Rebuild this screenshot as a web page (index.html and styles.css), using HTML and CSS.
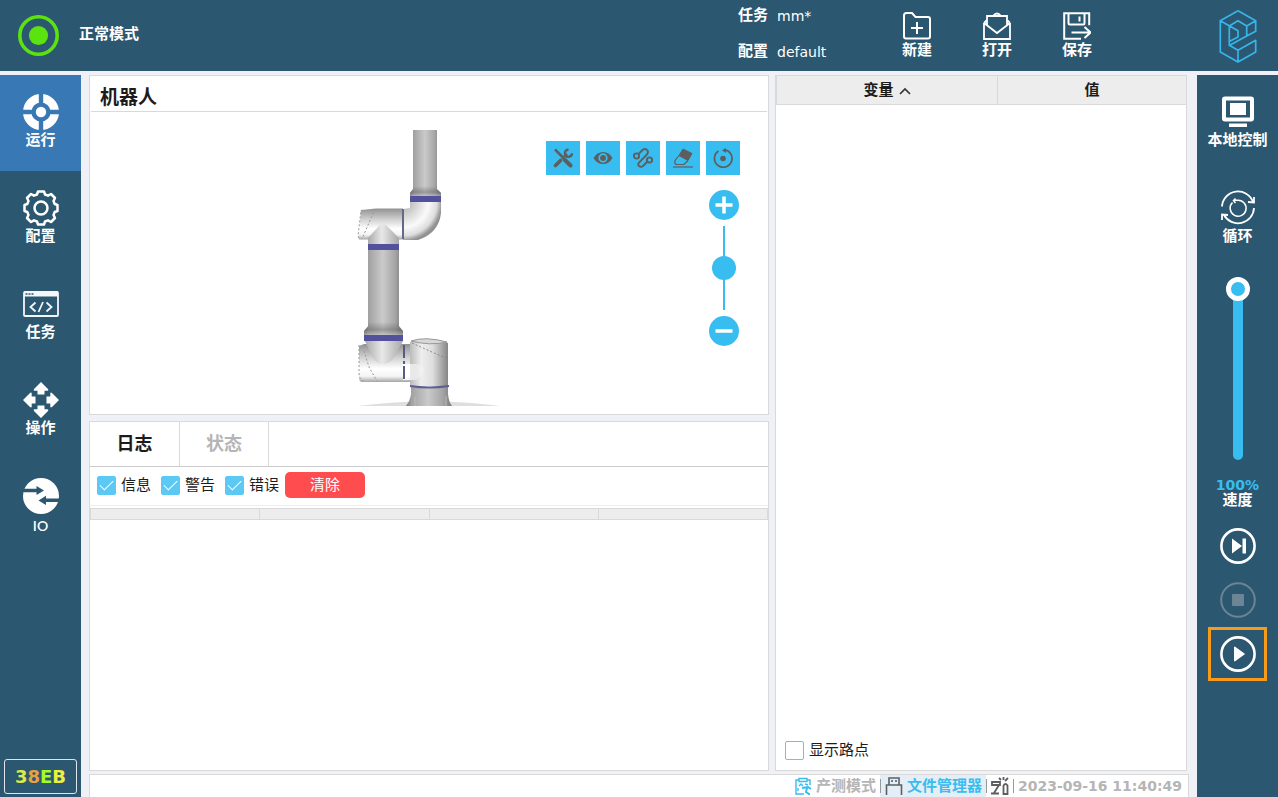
FILE: index.html
```html
<!DOCTYPE html>
<html lang="zh-CN">
<head>
<meta charset="utf-8">
<title>机器人</title>
<link rel="stylesheet" href="styles.css">
</head>
<body>
<header class="topbar">
  <div class="mode">
    <svg class="mode-light" viewBox="0 0 41 41" fill="none"><circle cx="20.500" cy="20.500" r="18.700" stroke="#5be30f" stroke-width="3.600"/><circle cx="20.500" cy="20.500" r="9.600" fill="#5be30f"/></svg>
    <span>正常模式</span>
  </div>
  <dl class="project">
    <dt>任务</dt><dd>mm*</dd>
    <dt>配置</dt><dd>default</dd>
  </dl>
  <div class="file-actions">
    <button class="file-btn" type="button">
      <svg viewBox="0 0 28 28" fill="none" stroke="#fff" stroke-width="2"><path d="M1 3.500Q1 1 3.500 1H9l3.500 4H25q2 0 2 2v17.500q0 2-2 2H3q-2 0-2-2Z"/><path d="M14 10v12M8 16h12"/></svg>
      <span>新建</span>
    </button>
    <button class="file-btn" type="button">
      <svg viewBox="0 0 28 28" fill="none" stroke="#fff" stroke-width="1.800"><path d="M1 11v16h26V11"/><path d="M1 11l13 10L27 11M4 13V4h20v9M1 11l3-3M27 11l-3-3M10 4q4-5 8 0"/></svg>
      <span>打开</span>
    </button>
    <button class="file-btn" type="button">
      <svg viewBox="0 0 28 28" fill="none" stroke="#fff" stroke-width="2"><path d="M18 26.800H1.200V1.200h25v12M5.500 1v10q0 1.500 1.500 1.500h13q1.500 0 1.500-1.500V1M16.500 4.500v5M8.500 20.500H27M21.500 15l6 5.500-6 5.500"/></svg>
      <span>保存</span>
    </button>
  </div>
  <div class="brand">
    <svg viewBox="0 0 38 54" fill="none" stroke="#35b5ea" stroke-width="1.700" stroke-linejoin="round"><path d="M19 1.700 1.300 11.700V43L19 53l17.700-10V31.300L19 41.300V53M19 1.700l17.700 10v10.500L27.700 27V17L19 11.700 10.300 17M1.300 11.700 19 21.700V28l-8.700 4.500v4L27.700 27M10.300 32.500V36.300L19 41.300M27.700 17l9-5.300M10.300 17v15.500"/></svg>
  </div>
</header>

<div class="shell">
  <nav class="side">
    <button class="side-btn active" type="button">
      <svg viewBox="0 0 36 36"><circle cx="18" cy="18" r="13.800" fill="none" stroke="#fff" stroke-width="8.400"/><circle cx="18" cy="18" r="5.200" fill="#fff"/><path d="M18 0v10M18 26v10M0 18h10M26 18h10" stroke="#3878b4" stroke-width="4.400"/></svg>
      <span>运行</span>
    </button>
    <button class="side-btn" type="button">
      <svg viewBox="0 0 36 36" fill="none" stroke="#fff" stroke-width="2.500" stroke-linejoin="round"><path d="M15 1.500h6l1 3 3 1.200 3-1.700 4 4-1.500 3 1.200 3 2.800 1v6l-2.800 1-1.200 3 1.500 3-4 4-3-1.700-3 1.200-1 3h-6l-1-3-3-1.200L8 32l-4-4 1.500-3-1.200-3L1.500 21v-6l2.800-1 1.200-3L4 8l4-4 3 1.700 3-1.200Z"/><circle cx="18" cy="18" r="6.500"/></svg>
      <span>配置</span>
    </button>
    <button class="side-btn" type="button">
      <svg viewBox="0 0 36 36" fill="none" stroke="#f4f6f8" stroke-width="1.800"><rect x="1" y="6" width="34" height="24" rx="1"/><path d="M1 8h34" stroke-width="5"/><path d="M12.500 16.500l-5 4.500 5 4.500M23.500 16.500l5 4.500-5 4.500M20 16l-4.500 10"/><path d="M2.500 8h8" stroke="#2c5771" stroke-width="1.500" stroke-dasharray="2 1"/></svg>
      <span>任务</span>
    </button>
    <button class="side-btn" type="button">
      <svg viewBox="0 0 36 36" fill="#fff"><path id="arrow" d="M18 0l7 7q1 1.500-.5 1.700h-3V12.500h-7V8.700h-3Q10 8.500 11 7Z"/><use href="#arrow" transform="rotate(90 18 18)"/><use href="#arrow" transform="rotate(180 18 18)"/><use href="#arrow" transform="rotate(270 18 18)"/></svg>
      <span>操作</span>
    </button>
    <button class="side-btn" type="button">
      <svg viewBox="0 0 36 36"><circle cx="18" cy="18" r="18" fill="#fff"/><path d="M0 10.700h13.500V8l7.500 4.500-7.500 4.500v-2.700H0ZM36 20.500H23v-2.800l-7.500 4.700 7.500 4.700V24h13Z" fill="#2c5771"/></svg>
      <span class="latin">IO</span>
    </button>
    <output class="checksum"><span class="c1">3</span><span class="c2">8</span><span class="c3">E</span><span class="c4">B</span></output>
  </nav>

  <main class="work">
    <section class="panel robot">
      <h1 class="panel-title">机器人</h1>
      <div class="view">
        <svg class="arm" viewBox="349 120 160 287">
          <defs>
            <linearGradient id="tube"><stop offset="0" stop-color="#777"/><stop offset=".12" stop-color="#a2a2a2"/><stop offset=".48" stop-color="#cacaca"/><stop offset=".8" stop-color="#a5a5a5"/><stop offset="1" stop-color="#777"/></linearGradient>
            <linearGradient id="shell"><stop offset="0" stop-color="#bbb"/><stop offset=".3" stop-color="#eee"/><stop offset=".6" stop-color="#ddd"/><stop offset="1" stop-color="#858585"/></linearGradient>
            <linearGradient id="joint" x2="0" y2="1"><stop offset="0" stop-color="#919191"/><stop offset=".35" stop-color="#d0d0d0"/><stop offset=".65" stop-color="#fff"/><stop offset=".85" stop-color="#f4f4f4"/><stop offset="1" stop-color="#a5a5a5"/></linearGradient>
            <linearGradient id="neck"><stop offset="0" stop-color="#aaa"/><stop offset=".45" stop-color="#e8e8e8"/><stop offset="1" stop-color="#a8a8a8"/></linearGradient>
            <linearGradient id="reach"><stop offset="0" stop-color="#fff"/><stop offset="1" stop-color="#fff" stop-opacity="0"/></linearGradient>
            <radialGradient id="bend" gradientUnits="userSpaceOnUse" cx="403" cy="202" r="39"><stop offset="0" stop-color="#aaa"/><stop offset=".35" stop-color="#d5d5d5"/><stop offset=".65" stop-color="#fafafa"/><stop offset=".87" stop-color="#ddd"/><stop offset="1" stop-color="#929292"/></radialGradient>
            <linearGradient id="flare" x2="0" y2="1"><stop offset="0" stop-color="#555" stop-opacity="0"/><stop offset=".55" stop-color="#555" stop-opacity=".4"/><stop offset="1" stop-color="#ddd" stop-opacity=".5"/></linearGradient>
          </defs>
          <path d="M358 406q30-4 71-5 42 1 71 5Z" fill="#dedede"/>
          <path d="M413 130h24v59l4 4v4h-31v-4l3-4Z" fill="url(#tube)"/>
          <path d="M413 186h24v3l4 4v4h-31v-4l3-4Z" fill="url(#flare)"/>
          <path d="M410 202h31v11q-2 20-23 27h-15v-31l7-1Z" fill="url(#bend)"/>
          <path d="M410 196h31v6h-31Z" fill="#52529c"/>
          <path d="M361 210l15-1.500h27V239.500H359l-1-3 2-15Z" fill="url(#joint)"/>
          <path d="M368 240v-2l11-12q4-4 8 0l12 12v6h-31Z" fill="url(#neck)"/>
          <path d="M359 238l-1-2 3-26M375 209l-13 30" fill="none" stroke="#999" stroke-dasharray="2 2"/>
          <path d="M403 209v30" stroke="#626b86" stroke-width="2"/>
          <path d="M368 250h31v76l4 5v5h-39v-5l4-5Z" fill="url(#tube)"/>
          <path d="M368 322h31v5l4 4v5h-39v-5l4-4Z" fill="url(#flare)"/>
          <path d="M368 244h31v6h-31Z" fill="#52529c"/>
          <path d="M359 346l5-2h46v38h-48q-3 0-3-4Z" fill="url(#joint)"/>
          <path d="M365 341h38l-8 15q-5 8-12 8t-11-8Z" fill="url(#neck)"/>
          <path d="M364 335h39v6h-39Z" fill="#52529c"/>
          <path d="M359 345v28q1 9 5 8M364 351l5 16 8 14" fill="none" stroke="#999" stroke-dasharray="2 2"/>
          <path d="M410 342q5-3 18-3t20 4v43h-38Z" fill="url(#shell)"/>
          <path d="M403 364h16l8 7-11 9h-13Z" fill="url(#reach)"/>
          <path d="M411 341q14-5 36 1-17 4-36-1Z" fill="#d8d8d8" stroke="#999"/>
          <path d="M412 343l31 14 5 1" fill="none" stroke="#8a8a8a" stroke-dasharray="2 2"/>
          <path d="M404 345v37" stroke="#565b83" stroke-width="2" stroke-dasharray="13 3 3 2"/>
          <path d="M411 387h37v7q1 9 4 12h-46q4-5 5-12Z" fill="url(#tube)"/>
          <path d="M410 386q19 3 39 0" fill="none" stroke="#5b6090" stroke-width="2"/>
          <path d="M415 397v9M446 396v10" stroke="#bbb"/>
        </svg>
        <div class="view-tools">
          <button class="tool" type="button" aria-label="工具"><svg viewBox="0 0 20 20" fill="none" stroke="#5e5e5e" stroke-width="3.500"><path d="M2 1.500l7.500 7.500" stroke-width="2.500"/><path d="M12 12l5.500 5.500" stroke-width="4" stroke-linecap="round"/><path d="M2.500 17.500l5-5" stroke-width="3.600" stroke-linecap="round"/><path d="M9 11l5-5" stroke-width="2.600"/><path d="M15.500 1.800q-4 0-3.500 4 1 3.500 4 3 3-.5 3-3.500" stroke-width="2.400"/></svg></button>
          <button class="tool" type="button" aria-label="显示"><svg viewBox="0 0 20 20"><path d="M.5 10Q4 4 10 4t9.500 6Q16 16 10 16T.5 10Z" fill="#5e5e5e"/><circle cx="10" cy="10" r="3.800" fill="none" stroke="#38bdf0" stroke-width="1.700"/></svg></button>
          <button class="tool" type="button" aria-label="轨迹"><svg viewBox="0 0 20 20" fill="none" stroke="#5e5e5e" stroke-width="1.900"><circle cx="3.500" cy="8" r="2.600"/><circle cx="16.500" cy="12" r="2.600"/><path d="M5.500 6l4-4q3-2 5 .5 1 2-.5 4l-8 8q-1.500 2 0 3.500 2 1.500 4 0l5-5"/></svg></button>
          <button class="tool" type="button" aria-label="擦除"><svg viewBox="0 0 20 20" fill="none" stroke="#5e5e5e"><path d="M10 1l9 4.500-4 7-9-5Z" fill="#5e5e5e"/><path d="M6 7.500l-4 5q-1 2 1 4h8l4-4" stroke-width="1.200"/><path d="M0 19h20" stroke-width="1.200"/></svg></button>
          <button class="tool" type="button" aria-label="复位"><svg viewBox="0 0 20 20" fill="none" stroke="#5e5e5e" stroke-width="1.700"><path d="M5.500 3A8.800 8.800 0 1 0 12 1.800"/><circle cx="10" cy="10.500" r="2.800" fill="#5e5e5e" stroke="none"/><path d="M13 0v5L9 2.200Z" fill="#5e5e5e" stroke="none"/></svg></button>
        </div>
        <div class="zoom">
          <button class="zoom-btn" type="button" aria-label="放大"><svg viewBox="0 0 30 30" stroke="#fff" stroke-width="3.500"><path d="M6.500 15h17M15 6.500v17"/></svg></button>
          <input class="zoom-range" type="range" min="0" max="100" value="50" aria-label="缩放">
          <button class="zoom-btn" type="button" aria-label="缩小"><svg viewBox="0 0 30 30" stroke="#fff" stroke-width="3.500"><path d="M6.500 15h17"/></svg></button>
        </div>
      </div>
    </section>

    <section class="panel log">
      <div class="tabs" role="tablist">
        <button class="tab current" type="button" role="tab" aria-selected="true">日志</button>
        <button class="tab" type="button" role="tab" aria-selected="false">状态</button>
      </div>
      <div class="filters">
        <div class="filter-set">
          <label class="check"><input type="checkbox" checked>信息</label>
          <label class="check"><input type="checkbox" checked>警告</label>
          <label class="check"><input type="checkbox" checked>错误</label>
        </div>
        <button class="clear" type="button">清除</button>
      </div>
      <table class="grid log-grid"><thead><tr><th></th><th></th><th></th><th></th></tr></thead></table>
    </section>

    <section class="panel vars">
      <table class="grid var-grid">
        <thead><tr>
          <th class="name">变量 <svg viewBox="0 0 12 8" fill="none" stroke="#333" stroke-width="1.600"><path d="M1 7l5-5 5 5"/></svg></th>
          <th>值</th>
        </tr></thead>
      </table>
      <label class="check waypoints"><input type="checkbox">显示路点</label>
    </section>

    <footer class="status">
      <span class="status-item"><svg viewBox="0 0 18 18" fill="none" stroke="#38bdf0" stroke-width="1.400"><path d="M5 3H2v14h8M13 3h3v5M5 1.500h8v3H5ZM5 9l2-2 2 2M4 11v3M11 7l3 1"/><path d="M8 11l6-1 3 2M13 11l-1 4 3 2v1" stroke-width="2"/></svg>产测模式</span>
      <a class="status-item files" href="#"><svg viewBox="0 0 18 18" fill="none" stroke="#5b6167" stroke-width="1.600"><path d="M4 8V1h10v7M1.500 18V8h15v10M7 3v2M11 3v2"/></svg>文件管理器</a>
      <span class="status-item"><svg viewBox="0 0 18 18" fill="none" stroke="#5e5e5e" stroke-width="1.800"><path d="M1 4v4h8V5H1M8 8l-5 8M0 16.500h8M12.500 17V8.500q2-3 4 0V17ZM8 1l2 2M12.500 0v3M17 1l-3 3"/></svg></span>
      <time class="status-item" datetime="2023-09-16T11:40:49">2023-09-16 11:40:49</time>
    </footer>
  </main>

  <aside class="side">
    <button class="side-btn" type="button">
      <svg viewBox="0 0 36 36"><rect x="4" y="4.500" width="28" height="21" rx="1" fill="none" stroke="#fff" stroke-width="4"/><path d="M10 9h16v12H10ZM9 29.500h18v3.500H9Z" fill="#fff"/></svg>
      <span>本地控制</span>
    </button>
    <button class="side-btn" type="button">
      <svg viewBox="0 0 36 36" fill="none" stroke="#fff" stroke-width="1.800"><path d="M2 16.500A16 16 0 0 1 33 12M34 18A16 16 0 0 1 4 25"/><path d="M34 7v5.500l-6-.5M2 30v-5.500l6 .5"/><path d="M12.500 12.500A8 8 0 1 0 18 10.200H14M15.500 8.500l-2 2 2 2.500" stroke-width="1.500"/></svg>
      <span>循环</span>
    </button>
    <input class="speed" id="speed" type="range" min="0" max="100" value="100">
    <output class="speed-value" for="speed">100%</output>
    <label class="speed-label" for="speed">速度</label>
    <div class="transport">
      <button class="play-btn" type="button" aria-label="单步"><svg viewBox="0 0 36 36" fill="#fff"><circle cx="18" cy="18" r="16.600" fill="none" stroke="#fff" stroke-width="2.600"/><path d="M12 10.500l10 7.500-10 7.500ZM22.500 10.500h3.500v15h-3.500Z"/></svg></button>
      <button class="play-btn" type="button" aria-label="停止" disabled><svg viewBox="0 0 36 36" fill="#6c8494"><circle cx="18" cy="18" r="16.800" fill="none" stroke="#6c8494" stroke-width="2"/><rect x="12" y="12" width="12" height="12" rx="1"/></svg></button>
      <button class="play-btn marked" type="button" aria-label="播放"><svg viewBox="0 0 36 36" fill="#fff"><circle cx="18" cy="18" r="16.600" fill="none" stroke="#fff" stroke-width="2.600"/><path d="M14 11.500q0-1.500 1.500-.5l9 6.500q.8.500 0 1l-9 6.500q-1.500 1-1.500-.5Z"/></svg></button>
    </div>
  </aside>
</div>
</body>
</html>
```
FILE: styles.css
```css
:root {
  --navy: #2c5771;
  --sky: #38bdf0;
  --line: #d9d9d9;
}
* { box-sizing: border-box; }
body {
  margin: 0;
  min-height: 100vh;
  display: flex;
  flex-direction: column;
  gap: 4px;
  background: #f0f1f6;
  color: #1c1c1c;
  font: 15px/20px "DejaVu Sans", "Noto Sans CJK SC", sans-serif;
}
button {
  border: 0;
  padding: 0;
  background: none;
  color: inherit;
  font: inherit;
}
svg { display: block; flex: none; }

/* top bar */
.topbar {
  display: flex;
  height: 71px;
  background: var(--navy);
  color: #fff;
  font-weight: bold;
}
.mode { flex: 1; display: flex; align-items: center; gap: 20px; padding-left: 18px; }
.mode span { padding-bottom: 4px; }
.mode-light { width: 41px; }
.project {
  display: grid;
  grid-template-columns: 39px 100px;
  align-content: start;
  row-gap: 15px;
  margin: 0;
  padding-top: 5px;
}
.project dd { margin: 0; padding-top: 1px; font-size: 14px; font-weight: 400; }
.file-actions { display: flex; margin-right: 80px; }
.file-btn {
  width: 80px;
  display: flex;
  flex-direction: column;
  align-items: center;
  padding-top: 12px;
}
.file-btn svg { width: 28px; height: 28px; }
.brand { width: 81px; display: grid; place-items: center; }
.brand svg { width: 38px; }

/* layout */
.shell { flex: 1; display: flex; }
.side {
  width: 81px;
  flex: none;
  display: flex;
  flex-direction: column;
  align-items: center;
  background: var(--navy);
  color: #fff;
  font-weight: bold;
}
.side-btn {
  width: 100%;
  height: 96px;
  display: flex;
  flex-direction: column;
  align-items: center;
  padding-top: 19px;
}
.side-btn.active { background: #3878b4; }
.side-btn svg { width: 36px; height: 36px; }
.latin { font: 600 14px/24px Lato, sans-serif; }
.checksum {
  margin-top: auto;
  margin-bottom: 3px;
  padding: 6px 10px;
  border: 1px solid #dfe5ea;
  border-radius: 3px;
  font-size: 18px;
  line-height: 21px;
}
.c1 { color: #dcea48; }
.c2 { color: #e8a33c; }
.c3 { color: #a4fa24; }
.c4 { color: #eeee3c; }

.work {
  flex: 1;
  display: grid;
  grid-template-columns: minmax(0, 680fr) minmax(0, 414fr);
  grid-template-rows: 340fr 356fr auto;
  column-gap: 6px;
  padding: 0 8px;
}
.panel { background: #fff; border: 1px solid var(--line); display: flex; flex-direction: column; }
.robot { grid-area: 1 / 1; }
.log { grid-area: 2 / 1; margin-top: 6px; }
.vars { grid-area: 1 / 2 / 3 / 3; margin-right: 2px; }

/* robot view */
.panel-title {
  margin: 0 1px;
  padding: 9px 9px 2px;
  border-bottom: 1px solid var(--line);
  font-size: 19px;
  line-height: 24px;
}
.view { position: relative; flex: 1; padding-top: 8px; }
.arm { width: 160px; margin: 0 auto; }
.view-tools { position: absolute; top: 29px; right: 28px; display: flex; gap: 6px; }
.tool { width: 34px; height: 34px; display: grid; place-items: center; background: var(--sky); }
.tool svg { width: 20px; }
.zoom {
  position: absolute;
  top: 78px;
  right: 29px;
  display: flex;
  flex-direction: column;
  align-items: center;
  gap: 6px;
}
.zoom-btn { width: 30px; height: 30px; border-radius: 50%; background: var(--sky); }
.zoom-range,
.speed {
  appearance: none;
  margin: 0;
  width: 24px;
  writing-mode: vertical-lr;
  direction: rtl;
}
.zoom-range { height: 84px; background: linear-gradient(var(--sky), var(--sky)) center / 2px 100% no-repeat; }
.speed { height: 183px; margin-top: 10px; background: none; }
.zoom-range::-webkit-slider-thumb,
.speed::-webkit-slider-thumb {
  appearance: none;
  width: 24px;
  height: 24px;
  border-radius: 50%;
  background: var(--sky);
}
.speed::-webkit-slider-runnable-track {
  width: 10px;
  border-radius: 5px;
  background: var(--sky);
}
.speed::-webkit-slider-thumb { border: 5px solid #fff; margin-left: -7px; }

/* log */
.tabs { display: flex; height: 45px; border-bottom: 1px solid #ccc; }
.tab {
  width: 89px;
  border-right: 1px solid var(--line);
  color: #b5b5b5;
  font-size: 18px;
  font-weight: bold;
}
.tab.current { width: 90px; color: #1c1c1c; }
.filters {
  display: flex;
  align-items: center;
  gap: 6px;
  padding: 5px 7px 7px;
  border-bottom: 1px solid #eee;
}
.filter-set { display: flex; gap: 10px; }
.check { display: flex; align-items: center; gap: 5px; }
.check input {
  appearance: none;
  width: 19px;
  height: 19px;
  margin: 0;
  display: grid;
  place-items: center;
  border: 1px solid #5cc8f4;
  border-radius: 2px;
  background: #fff;
}
.check input:checked { background: #5cc8f4; }
.check input:checked::after {
  content: "";
  width: 12px;
  height: 6px;
  margin-bottom: 4px;
  border: solid #fff;
  border-width: 0 0 1px 1px;
  transform: rotate(-45deg);
}
.clear { width: 80px; height: 26px; border-radius: 5px; background: #ff4c4f; color: #fff; }

/* tables */
.grid { width: 100%; table-layout: fixed; border-collapse: collapse; }
.grid th { padding: 0; border: 1px solid var(--line); background: #ededed; }
.log-grid { margin-top: 2px; }
.log-grid th { height: 11px; }
.var-grid th { height: 28px; border-width: 0 0 1px 1px; }
.var-grid .name { width: 54%; }
.var-grid svg { display: inline-block; width: 12px; }
.waypoints { margin-top: auto; padding: 0 9px 10px; }

/* status bar */
.status {
  grid-column: 1 / -1;
  display: flex;
  justify-content: flex-end;
  align-items: center;
  height: 23px;
  margin-top: 3px;
  padding-right: 6px;
  background: #fff;
  border: 1px solid var(--line);
  border-bottom: 0;
  color: #b5b5b5;
  font-weight: bold;
}
.status-item { display: flex; align-items: center; gap: 4px; height: 22px; }
.status-item + .status-item::before {
  content: "";
  width: 1px;
  height: 14px;
  background: #999;
}
.status-item:not(:last-child) { padding-right: 4px; }
.status-item svg { width: 18px; height: 18px; }
.files { background: #e4eef6; color: var(--sky); text-decoration: none; }
time.status-item { font-size: 14px; }

/* run controls */
.speed-value { margin-top: 18px; color: var(--sky); font-size: 14px; line-height: 15px; }
.speed-label { line-height: 15px; }
.transport { margin-top: 11px; }
.play-btn { width: 59px; height: 54px; display: grid; place-items: center; }
.play-btn svg { width: 36px; }
.play-btn.marked { border: 3px solid #f89a1a; }
```
